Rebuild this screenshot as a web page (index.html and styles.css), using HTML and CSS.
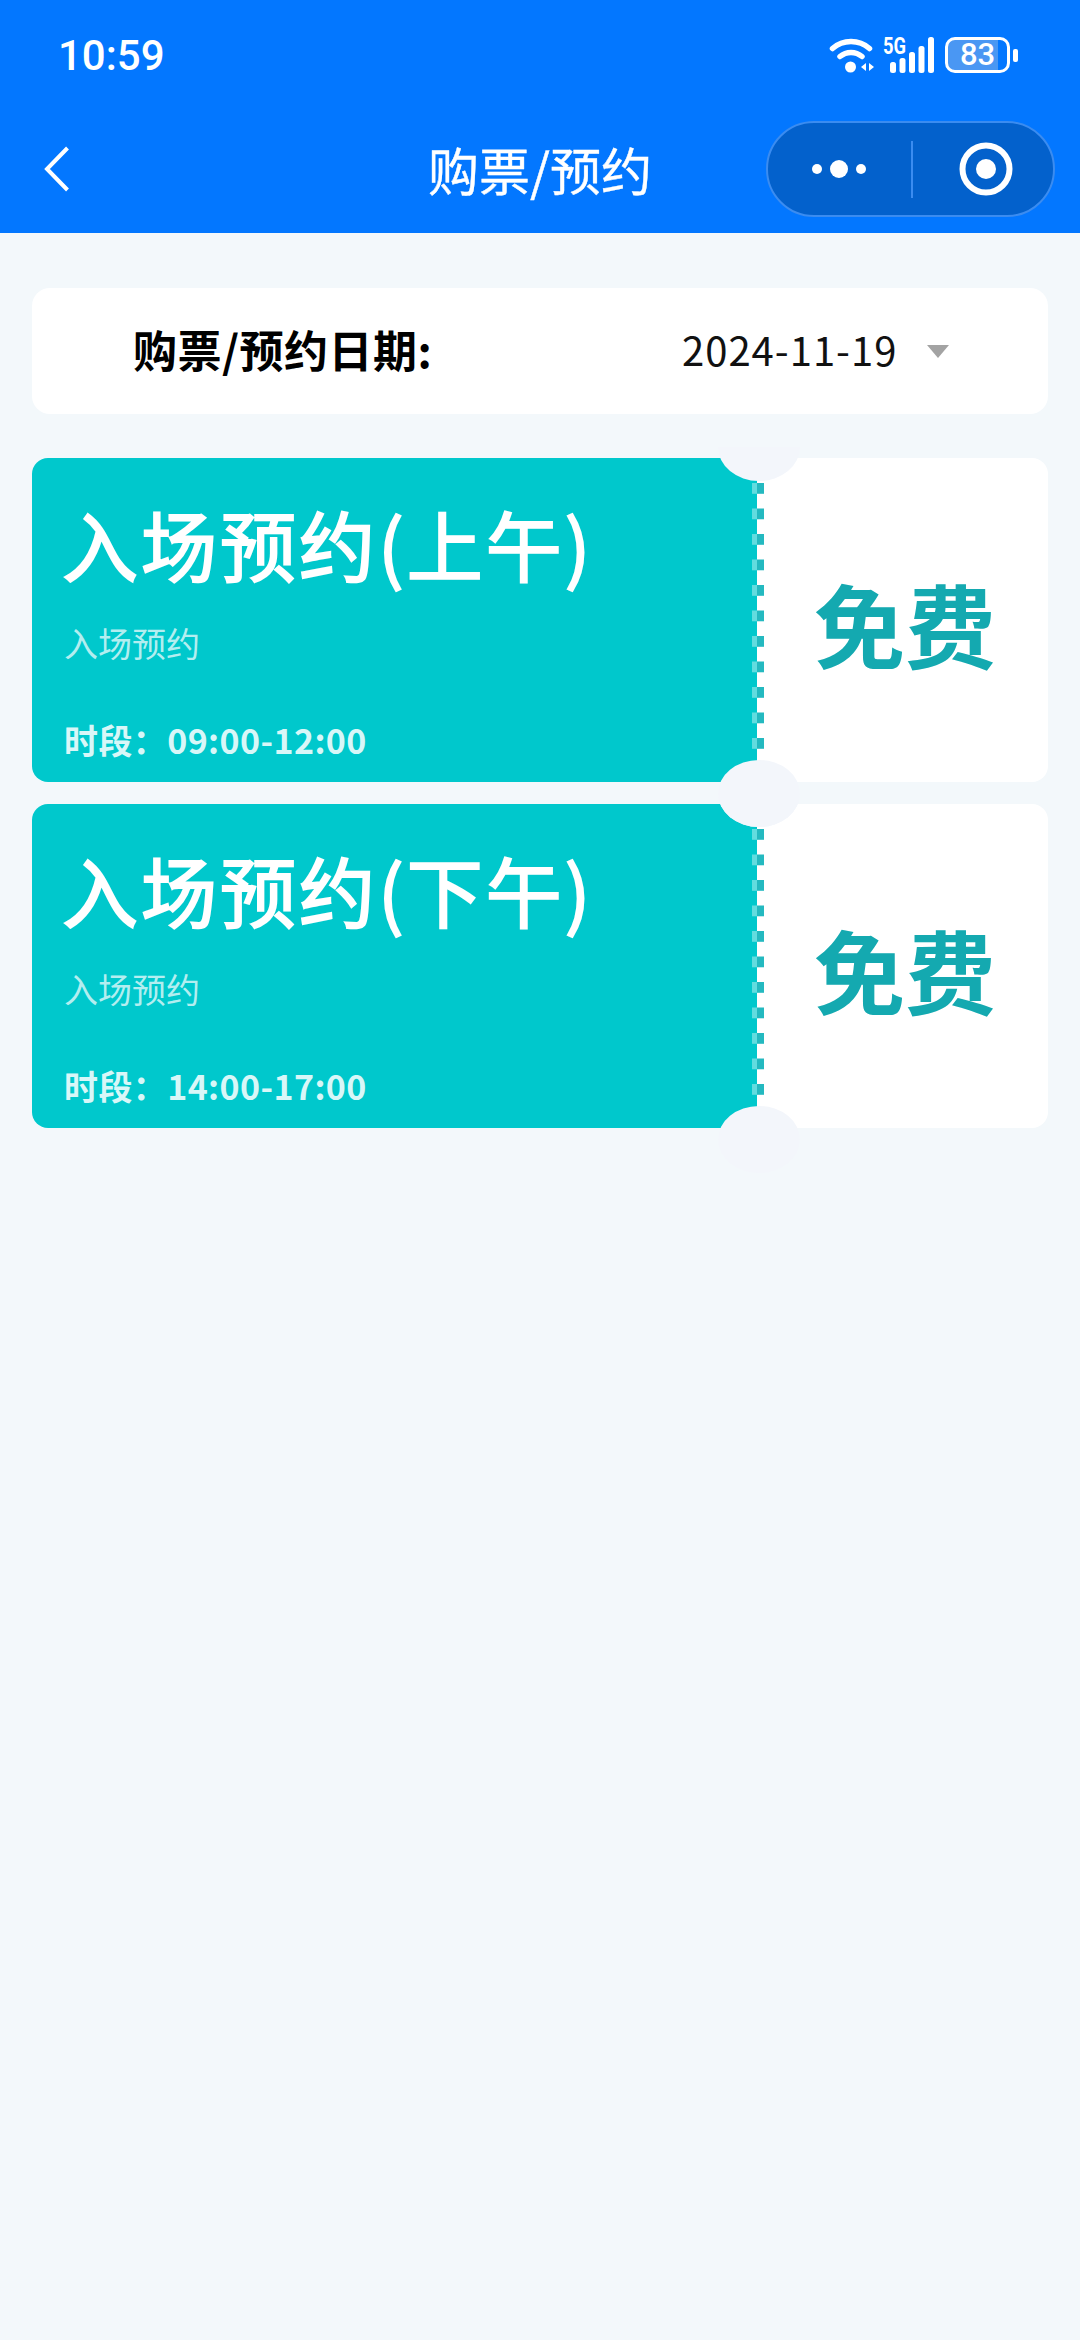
FILE: index.html
```html
<!DOCTYPE html>
<html lang="zh-CN">
	<head>
		<meta charset="utf-8">
		<title>购票/预约</title>
		<link rel="stylesheet" href="styles.css">
	</head>
	<body>
		<header class="header">
			<div class="status-bar">
				<span class="clock">10:59</span>
				<div class="status-icons">
					<svg class="wifi" width="46" height="36" viewBox="0 0 46 36">
						<path d="M3.500 11.500A28 28 0 0 1 40.500 11.500" fill="none" stroke="#fff" stroke-width="5.500" stroke-linecap="round"/>
						<path d="M11 19.500A17 17 0 0 1 33 19.500" fill="none" stroke="#fff" stroke-width="5.500" stroke-linecap="round"/>
						<circle cx="21.500" cy="30" r="5.500" fill="#fff"/>
						<path d="M37 26v8l-5-4zM40 26v8l5-4z" fill="#fff"/>
					</svg>
					<svg class="signal" width="51" height="46" viewBox="0 -5 51 46">
						<text x="0" y="17" class="signal-label" textLength="23" lengthAdjust="spacingAndGlyphs">5G</text>
						<rect x="7" y="25" width="6" height="11" rx="2.500" fill="#fff"/>
						<rect x="16.500" y="21" width="6" height="15" rx="2.500" fill="#fff"/>
						<rect x="26" y="15" width="6" height="21" rx="2.500" fill="#fff"/>
						<rect x="35.500" y="9" width="6" height="27" rx="2.500" fill="#fff"/>
						<rect x="45" y="0" width="6" height="36" rx="2.500" fill="#fff"/>
					</svg>
					<div class="battery">
						<div class="battery-body">83</div>
						<div class="battery-tip"></div>
					</div>
				</div>
			</div>
			<nav class="nav-bar">
				<svg class="back" width="26" height="46" viewBox="0 0 26 46">
					<path d="M23.500 2L3 23l20.500 21" fill="none" stroke="#fff" stroke-width="4"/>
				</svg>
				<div class="nav-title">购票/预约</div>
				<div class="capsule">
					<div class="capsule-more">
						<span class="dot"></span>
						<span class="dot dot-big"></span>
						<span class="dot"></span>
					</div>
					<div class="capsule-target">
						<svg width="54" height="54" viewBox="0 0 54 54">
							<circle cx="27" cy="27" r="23.500" fill="none" stroke="#fff" stroke-width="6"/>
							<circle cx="27" cy="27" r="10" fill="#fff"/>
						</svg>
					</div>
				</div>
			</nav>
		</header>

		<main class="content">
			<div class="date-card">
				<div class="date-label">购票/预约日期:</div>
				<div class="date-value">2024-11-19</div>
				<div class="date-arrow"></div>
			</div>

			<div class="ticket-list">
				<div class="ticket">
					<div class="ticket-info">
						<div class="ticket-name">入场预约(上午)</div>
						<div class="ticket-desc">入场预约</div>
						<div class="ticket-time">时段：09:00-12:00</div>
					</div>
					<div class="ticket-price">免费</div>
				</div>
				<div class="ticket">
					<div class="ticket-info">
						<div class="ticket-name">入场预约(下午)</div>
						<div class="ticket-desc">入场预约</div>
						<div class="ticket-time">时段：14:00-17:00</div>
					</div>
					<div class="ticket-price">免费</div>
				</div>
			</div>
		</main>
	</body>
</html>
```

FILE: styles.css
```css
* {
	box-sizing: border-box;
}

body {
	margin: 0;
	min-height: 2340px;
	background-color: #f3f8fb;
	font-family: "Noto Sans CJK SC", "Noto Sans", sans-serif;
}

/* top blue area */
.header {
	height: 233px;
	background-color: #0377ff;
	color: #fff;
}

.status-bar {
	height: 110px;
	padding: 0 62px 0 58px;
	display: flex;
	justify-content: space-between;
	align-items: center;
}

.clock {
	font-family: "Roboto", sans-serif;
	font-size: 42px;
	font-weight: 500;
}

.status-icons {
	display: flex;
	align-items: center;
	gap: 10px;
}

.wifi {
	margin-right: -2px;
}

.signal {
	margin-right: 1px;
}

.signal-label {
	font-family: "Roboto", sans-serif;
	font-size: 23px;
	font-weight: 700;
	fill: #fff;
}

.battery {
	display: flex;
	align-items: center;
	gap: 3px;
}

.battery-body {
	width: 65px;
	height: 36px;
	border: 3px solid #fff;
	border-radius: 10px;
	background: linear-gradient(to right, #4a97f3 85%, transparent 85%);
	font-family: "Roboto", sans-serif;
	font-size: 31px;
	font-weight: 500;
	line-height: 30px;
	text-align: center;
}

.battery-tip {
	width: 5px;
	height: 13px;
	border-radius: 2px;
	background-color: #fff;
}

.nav-bar {
	height: 123px;
	padding: 0 25px 5px;
	display: grid;
	grid-template-columns: 1fr auto 1fr;
	align-items: center;
}

.back {
	margin-left: 19px;
}

.nav-title {
	font-size: 51px;
	-webkit-text-stroke: 0.4px #fff;
}

.capsule {
	justify-self: end;
	width: 289px;
	height: 96px;
	display: flex;
	align-items: center;
	background-color: #0361cc;
	border: 2px solid #3b8cf0;
	border-radius: 48px;
}

.capsule-more {
	width: 145px;
	height: 57px;
	padding-right: 2px;
	display: flex;
	justify-content: center;
	align-items: center;
	gap: 8px;
	border-right: 2px solid #3b8cf0;
}

.dot {
	width: 10px;
	height: 10px;
	border-radius: 50%;
	background-color: #fff;
}

.dot-big {
	width: 18px;
	height: 18px;
}

.capsule-target {
	flex: 1;
	display: flex;
	justify-content: center;
	padding-left: 6px;
}

/* page body */
.content {
	padding: 55px 32px 0;
}

.date-card {
	height: 126px;
	padding-left: 101px;
	display: flex;
	align-items: center;
	background-color: #fff;
	border-radius: 18px;
}

.date-label {
	width: 549px;
	margin-bottom: 5px;
	font-size: 44px;
	font-weight: 700;
	letter-spacing: 0.5px;
	color: #000;
}

.date-value {
	width: 245px;
	margin-bottom: 5px;
	font-size: 40px;
	letter-spacing: 1px;
	color: #111;
}

.date-arrow {
	width: 0;
	height: 0;
	border-left: 11px solid transparent;
	border-right: 11px solid transparent;
	border-top: 13px solid #a3a3a3;
}

.ticket-list {
	margin-top: 44px;
	display: flex;
	flex-direction: column;
	gap: 22px;
}

.ticket {
	position: relative;
	height: 324px;
	display: flex;
}

/* round cut-outs on the tear line */
.ticket::before,
.ticket::after {
	content: "";
	position: absolute;
	left: 686px;
	width: 82px;
	height: 67px;
	border-radius: 50%;
	background-color: #f3f6fb;
	z-index: 2;
}

.ticket::before {
	top: -11px;
	height: 34px;
	border-radius: 0 0 41px 41px / 0 0 34px 34px;
}

.ticket::after {
	bottom: -45px;
}

.ticket-info {
	position: relative;
	width: 725px;
	padding-left: 30px;
	display: flex;
	flex-direction: column;
	background-color: #00c8cc;
	border-radius: 16px 0 0 16px;
	color: #fff;
}

/* checker strip */
.ticket-info::after {
	content: "";
	position: absolute;
	top: 25px;
	right: -7px;
	width: 12px;
	height: 277px;
	background-image: linear-gradient(to bottom, #62dcdf 0 11px, transparent 11px), linear-gradient(to bottom, #24b9c0 0 11px, transparent 11px);
	background-size: 5px 25.500px, 7px 25.500px;
	background-position: 0 0, 5px 0;
	background-repeat: repeat-y;
}

.ticket-name {
	margin-top: 32px;
	font-size: 76px;
	font-weight: 400;
	letter-spacing: 3px;
	line-height: 106px;
	-webkit-text-stroke: 2px #fff;
}

.ticket-desc {
	margin-top: 23px;
	padding-left: 2px;
	font-size: 34px;
	line-height: 48px;
	color: #b3eef0;
}

.ticket-time {
	margin-top: 48px;
	padding-left: 2px;
	font-size: 34px;
	font-weight: 700;
	letter-spacing: 0.400px;
	line-height: 50px;
	color: #d8f7f8;
}

.ticket-price {
	flex: 1;
	padding: 3px 0 0 5px;
	display: flex;
	justify-content: center;
	align-items: center;
	background-color: #fff;
	border-radius: 0 16px 16px 0;
	font-size: 91px;
	font-weight: 700;
	color: #14a9b0;
}
```
